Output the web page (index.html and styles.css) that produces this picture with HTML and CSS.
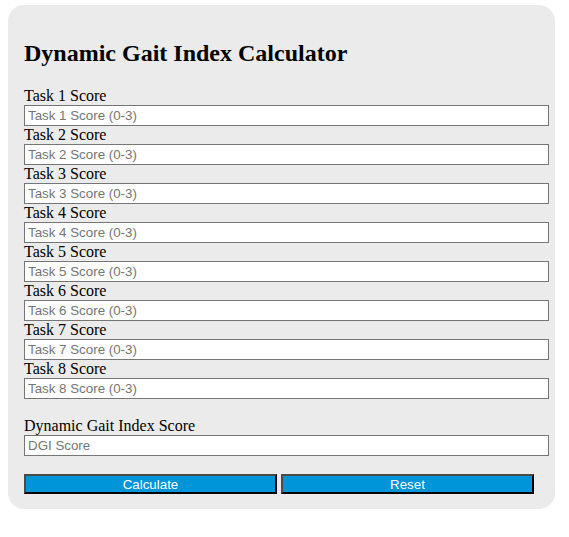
FILE: index.html
```html
<!DOCTYPE html>
<html lang="en">
<head>
  <meta charset="UTF-8">
  <title>Dynamic Gait Index Calculator</title>
  <link rel="stylesheet" href="styles.css">
</head>
<body>

  <div class="calc-box">
    <h2>Dynamic Gait Index Calculator</h2>

    <label for="t1">Task 1 Score</label>
    <input type="number" id="t1" class="score" placeholder="Task 1 Score (0-3)">
    <label for="t2">Task 2 Score</label>
    <input type="number" id="t2" class="score" placeholder="Task 2 Score (0-3)">
    <label for="t3">Task 3 Score</label>
    <input type="number" id="t3" class="score" placeholder="Task 3 Score (0-3)">
    <label for="t4">Task 4 Score</label>
    <input type="number" id="t4" class="score" placeholder="Task 4 Score (0-3)">
    <label for="t5">Task 5 Score</label>
    <input type="number" id="t5" class="score" placeholder="Task 5 Score (0-3)">
    <label for="t6">Task 6 Score</label>
    <input type="number" id="t6" class="score" placeholder="Task 6 Score (0-3)">
    <label for="t7">Task 7 Score</label>
    <input type="number" id="t7" class="score" placeholder="Task 7 Score (0-3)">
    <label for="t8">Task 8 Score</label>
    <input type="number" id="t8" class="score" placeholder="Task 8 Score (0-3)">

    <div class="resultado">
      <label for="dgi">Dynamic Gait Index Score</label>
      <input type="text" id="dgi" placeholder="DGI Score" readonly>
    </div>

    <div class="botoes">
      <button onclick="calcular()">Calculate</button>
      <button onclick="resetar()">Reset</button>
    </div>
  </div>

  <script>
    function calcular() {
      let total = 0;
      document.querySelectorAll(".score").forEach(el => {
        total += Number(el.value) || 0;
      });
      document.getElementById("dgi").value = total;
    }

    function resetar() {
      document.querySelectorAll("input").forEach(el => el.value = "");
    }
  </script>

</body>
</html>
```

FILE: styles.css
```css
body {
  margin: 5px 8px;
  font-family: 'Liberation Serif', 'Times New Roman', serif;
  color: #000;
  background: #fff;
}
.calc-box {
  box-sizing: border-box;
  max-width: 547px;
  background: #eaebea;
  border-radius: 16px;
  padding: 15px 6px 15px 16px;
}
h2 {
  font-size: 24px;
  margin: 20px 0;
}
label {
  display: block;
  font-size: 16px;
}
input {
  display: block;
  box-sizing: border-box;
  width: 100%;
  height: 21px;
  margin: 0;
  padding: 1px 3px;
  border: 1px solid #767676;
  background: #fff;
  font-family: 'Liberation Sans', Arial, sans-serif;
  font-size: 13.33px;
}
input::placeholder {
  color: #757575;
}
input::-webkit-inner-spin-button,
input::-webkit-outer-spin-button {
  -webkit-appearance: none;
  margin: 0;
}
input[type=number] {
  -moz-appearance: textfield;
}
.resultado {
  margin-top: 18px;
}
.botoes {
  display: flex;
  gap: 4px;
  margin-top: 18px;
}
button {
  box-sizing: border-box;
  width: 253px;
  height: 20px;
  padding: 0;
  background: #0094d9;
  color: #fff;
  border: 2px solid;
  border-color: #4a4a4a #000 #000 #4a4a4a;
  font-family: 'Liberation Sans', Arial, sans-serif;
  font-size: 13.33px;
  cursor: pointer;
}
```
